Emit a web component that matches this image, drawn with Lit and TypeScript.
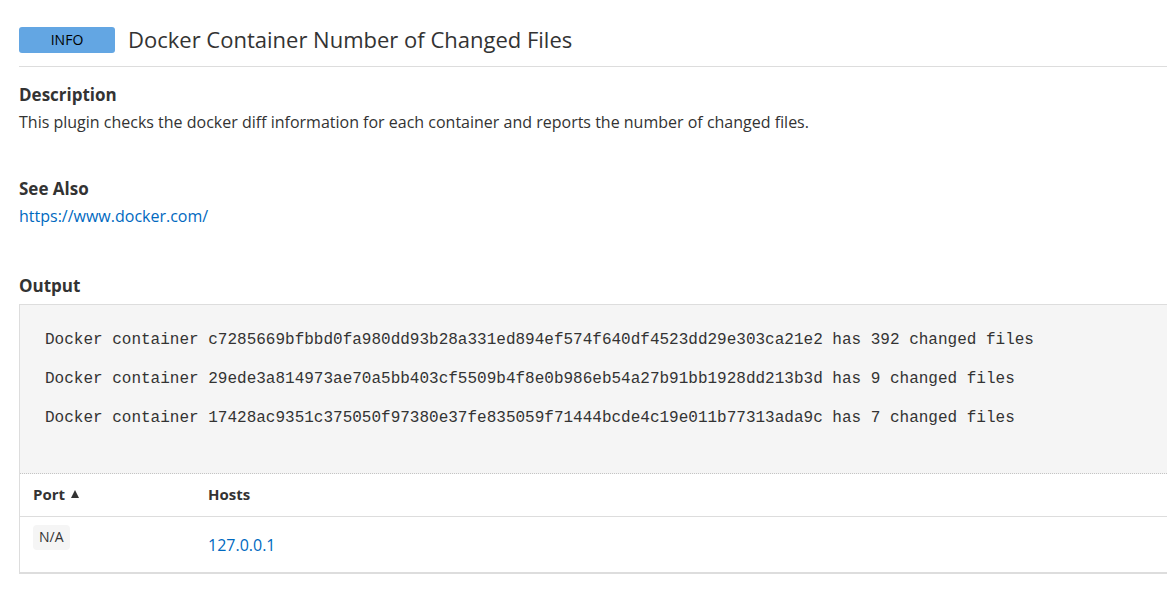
import { LitElement, html, css } from "lit";
import { customElement } from "lit/decorators.js";

interface Container {
  id: string;
  changed: number;
}

const CONTAINERS: Container[] = [
  { id: "c7285669bfbbd0fa980dd93b28a331ed894ef574f640df4523dd29e303ca21e2", changed: 392 },
  { id: "29ede3a814973ae70a5bb403cf5509b4f8e0b986eb54a27b91bb1928dd213b3d", changed: 9 },
  { id: "17428ac9351c375050f97380e37fe835059f71444bcde4c19e011b77313ada9c", changed: 7 },
];

@customElement("app-root")
export class AppRoot extends LitElement {
  static styles = css`
    :host {
      display: block;
      box-sizing: border-box;
      padding: 20px 0 0 19px;
      background: #fff;
      color: #333;
      font: 16px/24px "Open Sans", sans-serif;
    }
    * {
      box-sizing: border-box;
    }
    .head {
      display: flex;
      align-items: center;
      gap: 13px;
      padding-bottom: 7px;
      border-bottom: 1px solid #ddd;
    }
    .severity {
      width: 96px;
      border-radius: 3px;
      background: #63a6e3;
      color: #000;
      font-size: 14px;
      line-height: 26px;
      text-align: center;
    }
    h1 {
      margin: 0;
      font-size: 22px;
      font-weight: 400;
      line-height: 39px;
    }
    h2 {
      margin: 0;
      font-size: 17px;
      font-weight: 700;
      line-height: 30px;
    }
    p {
      margin: 0;
    }
    .section {
      padding-top: 13px;
      padding-bottom: 27px;
    }
    .results {
      padding-top: 16px;
    }
    a {
      color: #0069bf;
      text-decoration: none;
    }
    .output {
      margin-top: 3px;
      border: 1px solid #ddd;
      border-right: 0;
      border-bottom-width: 2px;
    }
    pre {
      margin: 0;
      padding: 16px 25px 35px;
      border-bottom: 1px dotted #c4c4c4;
      background: #f5f5f5;
      font: 16px/39px "Liberation Mono", monospace;
      overflow: hidden;
    }
    table {
      width: 100%;
      border-collapse: separate;
      border-spacing: 0;
      table-layout: fixed;
    }
    .port {
      width: 175px;
    }
    th {
      padding: 0 13px 2px;
      height: 43px;
      border-bottom: 1px solid #ddd;
      font-size: 15px;
      font-weight: 700;
      text-align: left;
    }
    td {
      height: 55px;
      padding: 8px 13px;
      vertical-align: top;
    }
    .host {
      vertical-align: middle;
    }
    .sort {
      display: flex;
      align-items: center;
      gap: 6px;
      padding: 0;
      border: 0;
      background: none;
      color: inherit;
      font: inherit;
    }
    .arrow {
      width: 8px;
      height: 8px;
      fill: currentColor;
    }
    .tag {
      display: inline-block;
      padding: 0 6px 2px;
      border-radius: 4px;
      background: #f5f5f5;
      font-size: 14px;
      line-height: 23px;
      vertical-align: top;
    }
  `;

  render() {
    const output = CONTAINERS.map(
      (c) => `Docker container ${c.id} has ${c.changed} changed files`
    ).join("\n");
    return html`
      <header class="head">
        <span class="severity">INFO</span>
        <h1>Docker Container Number of Changed Files</h1>
      </header>
      <section class="section">
        <h2>Description</h2>
        <p>This plugin checks the docker diff information for each container and reports the number of changed files.</p>
      </section>
      <section class="section">
        <h2>See Also</h2>
        <p><a href="https://www.docker.com/">https://www.docker.com/</a></p>
      </section>
      <section class="section results">
        <h2>Output</h2>
        <div class="output">
          <pre>${output}</pre>
          <table>
            <thead>
              <tr>
                <th class="port" scope="col" aria-sort="ascending">
                  <button class="sort" type="button">Port
                    <svg class="arrow" viewBox="0 0 8 8" aria-hidden="true"><path d="M4 0 8 8H0Z" /></svg>
                  </button>
                </th>
                <th scope="col">Hosts</th>
              </tr>
            </thead>
            <tbody>
              <tr>
                <td><span class="tag">N/A</span></td>
                <td class="host"><a href="#host">127.0.0.1</a></td>
              </tr>
            </tbody>
          </table>
        </div>
      </section>
    `;
  }
}
